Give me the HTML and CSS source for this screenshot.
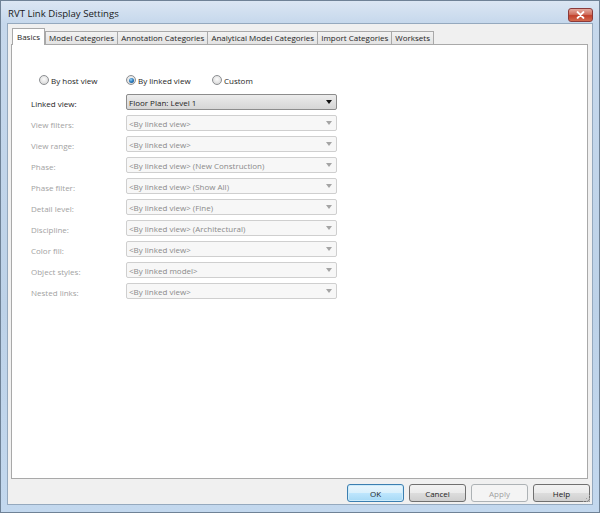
FILE: index.html
```html
<!DOCTYPE html>
<html>
<head>
<meta charset="utf-8">
<link rel="stylesheet" href="styles.css">
</head>
<body>
<div class="window">
  <div class="titlebar">
    <span class="title">RVT Link Display Settings</span>
    <span class="close">
      <svg width="24" height="14" viewBox="0 0 24 14"><path d="M9 4 L15 10 M15 4 L9 10" stroke="#fff" stroke-width="2.2" stroke-linecap="round"/></svg>
    </span>
  </div>
  <div class="client">
    <div class="tabs">
      <div class="tab active">Basics</div>
      <div class="tab">Model Categories</div>
      <div class="tab">Annotation Categories</div>
      <div class="tab">Analytical Model Categories</div>
      <div class="tab">Import Categories</div>
      <div class="tab">Worksets</div>
    </div>
    <div class="panel">
      <div class="radios">
        <div class="radio"><span class="dot"></span>By host view</div>
        <div class="radio"><span class="dot checked"></span>By linked view</div>
        <div class="radio"><span class="dot"></span>Custom</div>
      </div>
      <div class="form">
        <div class="label">Linked view:</div>
        <div class="combo"><span>Floor Plan: Level 1</span><i class="arrow"></i></div>
        <div class="label off">View filters:</div>
        <div class="combo off"><span>&lt;By linked view&gt;</span><i class="arrow"></i></div>
        <div class="label off">View range:</div>
        <div class="combo off"><span>&lt;By linked view&gt;</span><i class="arrow"></i></div>
        <div class="label off">Phase:</div>
        <div class="combo off"><span>&lt;By linked view&gt; (New Construction)</span><i class="arrow"></i></div>
        <div class="label off">Phase filter:</div>
        <div class="combo off"><span>&lt;By linked view&gt; (Show All)</span><i class="arrow"></i></div>
        <div class="label off">Detail level:</div>
        <div class="combo off"><span>&lt;By linked view&gt; (Fine)</span><i class="arrow"></i></div>
        <div class="label off">Discipline:</div>
        <div class="combo off"><span>&lt;By linked view&gt; (Architectural)</span><i class="arrow"></i></div>
        <div class="label off">Color fill:</div>
        <div class="combo off"><span>&lt;By linked view&gt;</span><i class="arrow"></i></div>
        <div class="label off">Object styles:</div>
        <div class="combo off"><span>&lt;By linked model&gt;</span><i class="arrow"></i></div>
        <div class="label off">Nested links:</div>
        <div class="combo off"><span>&lt;By linked view&gt;</span><i class="arrow"></i></div>
      </div>
    </div>
    <div class="buttons">
      <div class="btn default">OK</div>
      <div class="btn">Cancel</div>
      <div class="btn disabled">Apply</div>
      <div class="btn">Help</div>
    </div>
    <svg class="grip" width="8" height="8" viewBox="0 0 8 8">
      <rect x="6" y="0" width="1" height="1" fill="#a0a0a0"/>
      <rect x="3" y="3" width="1" height="1" fill="#a0a0a0"/>
      <rect x="6" y="3" width="1" height="1" fill="#a0a0a0"/>
      <rect x="0" y="6" width="1" height="1" fill="#a0a0a0"/>
      <rect x="3" y="6" width="1" height="1" fill="#a0a0a0"/>
      <rect x="6" y="6" width="1" height="1" fill="#a0a0a0"/>
    </svg>
  </div>
</div>
</body>
</html>
```

FILE: styles.css
```css
* { box-sizing: border-box; }
html, body { margin: 0; padding: 0; }
body {
  width: 600px;
  height: 513px;
  overflow: hidden;
  font-family: "Open Sans", "Noto Sans", sans-serif;
  font-size: 8px;
  color: #1e1e1e;
}
.window {
  width: 600px;
  height: 513px;
  border: 1px solid #6f8296;
  background: linear-gradient(to bottom, #dbe6f3 0px, #c6d8ec 22px, #bdd2e8 60%, #c3d8ee 100%);
  padding: 0 6px 7px 6px;
  display: flex;
  flex-direction: column;
}
.titlebar {
  height: 22px;
  display: flex;
  align-items: center;
  justify-content: space-between;
  padding-left: 1px;
}
.title {
  font-size: 9.6px;
  color: #1a1a1a;
  padding-top: 3px;
}
.close {
  width: 25px;
  height: 14px;
  margin-top: 5px;
  border: 1px solid #8b3a3a;
  border-radius: 3px;
  background: linear-gradient(to bottom, #e5a99e 0%, #d0705f 45%, #c2402c 55%, #d36a4f 100%);
  display: flex;
  align-items: center;
  justify-content: center;
}
.close svg { display: block; }
.client {
  flex: 1;
  position: relative;
  background: #f0f0f0;
  border: 1px solid #95a9be;
  padding: 4px 4px 0 3px;
  display: flex;
  flex-direction: column;
}
.tabs {
  display: flex;
  align-items: flex-end;
  height: 16px;
  padding-left: 1px;
  position: relative;
  z-index: 1;
}
.tab {
  height: 13px;
  padding: 0 3px;
  border: 1px solid #a9a9a9;
  border-bottom: none;
  margin-left: -1px;
  background: linear-gradient(to bottom, #f2f2f2, #e3e3e3);
  line-height: 12px;
  white-space: nowrap;
  color: #1e1e1e;
}
.tab.active {
  height: 17px;
  margin-bottom: -1px;
  background: #fff;
  padding: 0 4px;
  line-height: 15px;
  margin-left: 0;
  margin-right: 1px;
}
.panel {
  height: 435px;
  background: #fff;
  border: 1px solid #a9a9a9;
  padding: 29px 0 0 19px;
}
.radios {
  display: grid;
  grid-template-columns: 87px 86px auto;
  padding-left: 8px;
  height: 12px;
  align-items: center;
}
.radio {
  display: flex;
  align-items: center;
  gap: 2px;
  color: #1e1e1e;
}
.dot {
  width: 10px;
  height: 10px;
  border-radius: 50%;
  border: 1px solid #8c8f92;
  background: radial-gradient(circle at 50% 40%, #fbfbfb 0%, #e6e6e6 50%, #cfcfcf 100%);
  position: relative;
}
.dot.checked::after {
  content: "";
  position: absolute;
  left: 1.5px;
  top: 1.5px;
  width: 5px;
  height: 5px;
  border-radius: 50%;
  background: radial-gradient(circle at 40% 35%, #9fd4f5 0%, #2d7fc1 45%, #14477e 100%);
}
.form {
  display: grid;
  grid-template-columns: 95px 211px;
  grid-auto-rows: 16px;
  row-gap: 5px;
  margin-top: 8px;
  align-items: center;
}
.label { color: #1e1e1e; padding-top: 2px; }
.label.off { color: #a2a2a2; }
.combo {
  height: 16px;
  border: 1px solid #8c8c8c;
  border-radius: 2px;
  background: linear-gradient(to bottom, #ececec 0%, #e0e0e0 50%, #d6d6d6 100%);
  display: flex;
  align-items: center;
  justify-content: space-between;
  padding: 0 4px 0 2px;
  color: #1e1e1e;
}
.combo.off {
  border-color: #cfcfcf;
  background: #f7f7f7;
  color: #8a8a8a;
}
.arrow {
  width: 0;
  height: 0;
  border-left: 3.5px solid transparent;
  border-right: 3.5px solid transparent;
  border-top: 4px solid #111;
}
.combo.off .arrow { border-top-color: #a4a4a4; }
.buttons {
  display: flex;
  justify-content: flex-end;
  gap: 5px;
  margin-top: 5px;
  margin-right: -2px;
}
.btn {
  width: 57px;
  height: 18px;
  border: 1px solid #707070;
  border-radius: 3px;
  background: linear-gradient(to bottom, #f2f2f2 0%, #ebebeb 50%, #dddddd 51%, #cfcfcf 100%);
  display: flex;
  align-items: center;
  justify-content: center;
  color: #1e1e1e;
}
.btn.default {
  border-color: #3c7fb1;
  background: linear-gradient(to bottom, #eaf6fd 0%, #d9f0fc 50%, #bee6fd 51%, #a7d9f5 100%);
  box-shadow: inset 0 0 0 1px #cdebfa;
}
.btn.disabled {
  border-color: #adb2b5;
  background: #f4f4f4;
  color: #a0a0a0;
}
.grip {
  position: absolute;
  right: 1px;
  bottom: 1px;
}
```
